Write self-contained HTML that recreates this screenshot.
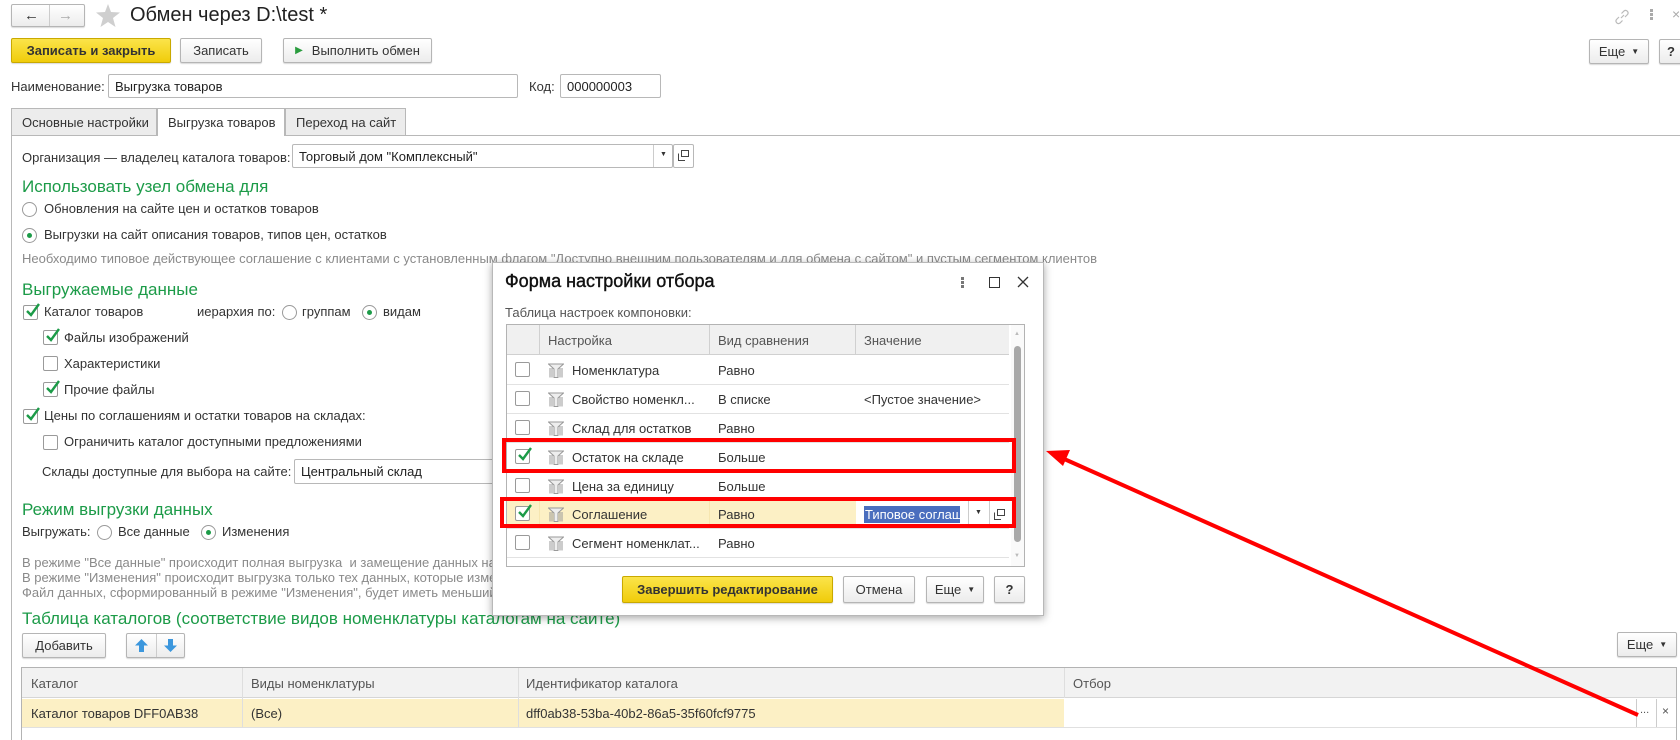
<!DOCTYPE html>
<html><head><meta charset="utf-8">
<style>
*{box-sizing:border-box;margin:0;padding:0}
body{width:1680px;height:740px;overflow:hidden;background:#fff;font-family:"Liberation Sans",Arial,sans-serif;font-size:13px;color:#333;position:relative}
.a{position:absolute;white-space:nowrap}
.btn{position:absolute;border:1px solid #b5b5b5;border-radius:2px;background:linear-gradient(#fff,#ececec);box-shadow:0 1px 1px rgba(0,0,0,.15);display:flex;align-items:center;justify-content:center;color:#333;font-size:13px}
.yb{background:linear-gradient(#fbe44a,#f0cc0a);border-color:#c9a900;font-weight:bold;color:#333}
.inp{position:absolute;border:1px solid #b8b8b8;border-radius:2px;background:#fff;padding-left:6px;display:flex;align-items:center;color:#222}
.h{position:absolute;color:#1c9b48;font-size:17px;white-space:nowrap}
.cb{position:absolute;width:15px;height:15px;border:1px solid #9a9a9a;border-radius:2px;background:#fff}
.cb svg{position:absolute;left:1px;top:-4px}
.rd{position:absolute;width:15px;height:15px;border:1px solid #9a9a9a;border-radius:50%;background:#fff}
.rd.on::after{content:"";position:absolute;left:4px;top:4px;width:5px;height:5px;border-radius:50%;background:#1c9b48}
.note{position:absolute;color:#8a8a8a;white-space:nowrap}
.grid{position:absolute;border:1px solid #b3b3b3}
</style></head><body>

<!-- top bar -->
<div class="btn" style="left:11px;top:4px;width:74px;height:23px;justify-content:flex-start">
  <span style="position:absolute;left:12px;top:2px;font-size:15px;color:#333">&#8592;</span>
  <span style="position:absolute;left:37px;top:0;width:1px;height:21px;background:#ccc"></span>
  <span style="position:absolute;left:46px;top:2px;font-size:15px;color:#aaa">&#8594;</span>
</div>
<svg class="a" style="left:96px;top:4px" width="24" height="23" viewBox="0 0 24 23"><polygon points="12,0 15,8 24,8.5 17,14 19.5,23 12,18 4.5,23 7,14 0,8.5 9,8" fill="#cfcfcf"/></svg>
<div class="a" style="left:130px;top:4px;font-size:20px;color:#222">Обмен через D:\test *</div>
<svg class="a" style="left:1614px;top:9px" width="16" height="16" viewBox="0 0 16 16"><path d="M7 9 L10 6 M5 8 L2.5 10.5 a2.5 2.5 0 0 0 3.5 3.5 L8.5 11.5 M11 8 L13.5 5.5 a2.5 2.5 0 0 0 -3.5 -3.5 L7.5 4.5" stroke="#bbb" fill="none" stroke-width="1.2"/></svg>
<div class="a" style="left:1650px;top:9px;width:3px;height:3px;background:#aaa;box-shadow:0 4px #aaa,0 8px #aaa"></div>
<div class="a" style="left:1672px;top:6px;color:#aaa;font-size:14px">×</div>

<div class="btn yb" style="left:11px;top:38px;width:160px;height:25px">Записать и закрыть</div>
<div class="btn" style="left:180px;top:38px;width:82px;height:25px">Записать</div>
<div class="btn" style="left:283px;top:38px;width:149px;height:25px"><span style="color:#2a9c3e;font-size:10px;margin-right:9px">&#9654;</span>Выполнить обмен</div>
<div class="btn" style="left:1589px;top:39px;width:60px;height:25px">Еще <span style="font-size:8px;margin-left:6px">&#9660;</span></div>
<div class="btn" style="left:1659px;top:39px;width:30px;height:25px;font-weight:bold;justify-content:flex-start;padding-left:7px">?</div>

<div class="a" style="left:11px;top:79px">Наименование:</div>
<div class="inp" style="left:108px;top:74px;width:410px;height:24px">Выгрузка товаров</div>
<div class="a" style="left:529px;top:79px">Код:</div>
<div class="inp" style="left:560px;top:74px;width:101px;height:24px">000000003</div>

<!-- tabs -->
<div class="a" style="left:11px;top:135px;width:1669px;height:1px;background:#b8b8b8"></div>
<div class="a" style="left:11px;top:135px;width:1px;height:605px;background:#b8b8b8"></div>
<div class="a" style="left:11px;top:108px;width:146px;height:27px;border:1px solid #b8b8b8;border-bottom:none;background:#ececec;padding:6px 0 0 10px">Основные настройки</div>
<div class="a" style="left:157px;top:108px;width:128px;height:28px;border:1px solid #b8b8b8;border-bottom:none;background:#fff;padding:6px 0 0 10px">Выгрузка товаров</div>
<div class="a" style="left:285px;top:108px;width:121px;height:27px;border:1px solid #b8b8b8;border-bottom:none;background:#ececec;padding:6px 0 0 10px">Переход на сайт</div>

<div class="a" style="left:22px;top:150px">Организация — владелец каталога товаров:</div>
<div class="inp" style="left:292px;top:144px;width:381px;height:24px">Торговый дом "Комплексный"</div>
<div class="a" style="left:653px;top:145px;width:1px;height:22px;background:#ccc"></div>
<div class="a" style="left:660px;top:151px;font-size:7px">&#9660;</div>
<div class="inp" style="left:673px;top:144px;width:21px;height:24px;padding:0"></div>
<svg class="a" style="left:678px;top:150px" width="11" height="11" viewBox="0 0 11 11"><rect x="3.5" y="0.5" width="7" height="6" fill="none" stroke="#444"/><path d="M0.5 3.5 V10.5 H7" fill="none" stroke="#444"/></svg>

<div class="h" style="left:22px;top:177px">Использовать узел обмена для</div>
<div class="rd" style="left:22px;top:202px"></div><div class="a" style="left:44px;top:201px">Обновления на сайте цен и остатков товаров</div>
<div class="rd on" style="left:22px;top:228px"></div><div class="a" style="left:44px;top:227px">Выгрузки на сайт описания товаров, типов цен, остатков</div>
<div class="note" style="left:22px;top:251px">Необходимо типовое действующее соглашение с клиентами с установленным флагом "Доступно внешним пользователям и для обмена с сайтом" и пустым сегментом клиентов</div>

<div class="h" style="left:22px;top:280px">Выгружаемые данные</div>
<div class="cb" style="left:23px;top:305px"><svg width="16" height="16" viewBox="0 0 16 16"><path d="M2 9 L6 13 L14 2" stroke="#1c9b48" stroke-width="2.4" fill="none"/></svg></div>
<div class="a" style="left:44px;top:304px">Каталог товаров</div>
<div class="a" style="left:197px;top:304px">иерархия по:</div>
<div class="rd" style="left:282px;top:305px"></div><div class="a" style="left:302px;top:304px">группам</div>
<div class="rd on" style="left:362px;top:305px"></div><div class="a" style="left:383px;top:304px">видам</div>
<div class="cb" style="left:43px;top:330px"><svg width="16" height="16" viewBox="0 0 16 16"><path d="M2 9 L6 13 L14 2" stroke="#1c9b48" stroke-width="2.4" fill="none"/></svg></div>
<div class="a" style="left:64px;top:330px">Файлы изображений</div>
<div class="cb" style="left:43px;top:356px"></div><div class="a" style="left:64px;top:356px">Характеристики</div>
<div class="cb" style="left:43px;top:382px"><svg width="16" height="16" viewBox="0 0 16 16"><path d="M2 9 L6 13 L14 2" stroke="#1c9b48" stroke-width="2.4" fill="none"/></svg></div>
<div class="a" style="left:64px;top:382px">Прочие файлы</div>
<div class="cb" style="left:23px;top:409px"><svg width="16" height="16" viewBox="0 0 16 16"><path d="M2 9 L6 13 L14 2" stroke="#1c9b48" stroke-width="2.4" fill="none"/></svg></div>
<div class="a" style="left:44px;top:408px">Цены по соглашениям и остатки товаров на складах:</div>
<div class="cb" style="left:43px;top:435px"></div><div class="a" style="left:64px;top:434px">Ограничить каталог доступными предложениями</div>
<div class="a" style="left:42px;top:464px">Склады доступные для выбора на сайте:</div>
<div class="inp" style="left:294px;top:459px;width:220px;height:25px">Центральный склад</div>

<div class="h" style="left:22px;top:500px">Режим выгрузки данных</div>
<div class="a" style="left:22px;top:524px">Выгружать:</div>
<div class="rd" style="left:97px;top:525px"></div><div class="a" style="left:118px;top:524px">Все данные</div>
<div class="rd on" style="left:201px;top:525px"></div><div class="a" style="left:222px;top:524px">Изменения</div>
<div class="note" style="left:22px;top:555px">В режиме "Все данные" происходит полная выгрузка &nbsp;и замещение данных на сайте</div>
<div class="note" style="left:22px;top:570px">В режиме "Изменения" происходит выгрузка только тех данных, которые изменились</div>
<div class="note" style="left:22px;top:585px">Файл данных, сформированный в режиме "Изменения", будет иметь меньший размер</div>

<div class="h" style="left:22px;top:609px">Таблица каталогов (соответствие видов номенклатуры каталогам на сайте)</div>
<div class="btn" style="left:22px;top:633px;width:84px;height:25px">Добавить</div>
<div class="btn" style="left:126px;top:633px;width:59px;height:25px">
 <span style="position:absolute;left:29px;top:0;width:1px;height:23px;background:#ccc"></span>
 <svg class="a" style="left:8px;top:5px" width="13" height="13" viewBox="0 0 13 13"><path d="M6.5 0 L13 6.5 H9 V13 H4 V6.5 H0 Z" fill="#3c97dd"/></svg>
 <svg class="a" style="left:37px;top:5px" width="13" height="13" viewBox="0 0 13 13"><path d="M6.5 13 L13 6.5 H9 V0 H4 V6.5 H0 Z" fill="#3c97dd"/></svg>
</div>
<div class="btn" style="left:1617px;top:632px;width:60px;height:25px">Еще <span style="font-size:8px;margin-left:6px">&#9660;</span></div>

<div class="grid" style="left:21px;top:667px;width:1656px;height:73px;border-bottom:none"></div>
<div class="a" style="left:22px;top:668px;width:1654px;height:30px;background:#f2f2f2;border-bottom:1px solid #d6d6d6"></div>
<div class="a" style="left:22px;top:699px;width:1042px;height:28px;background:#fcf0c5"></div>
<div class="a" style="left:22px;top:727px;width:1654px;height:1px;background:#e0e0e0"></div>
<div class="a" style="left:242px;top:668px;width:1px;height:59px;background:#dedede"></div>
<div class="a" style="left:518px;top:668px;width:1px;height:59px;background:#dedede"></div>
<div class="a" style="left:1064px;top:668px;width:1px;height:30px;background:#dedede"></div>
<div class="a" style="left:31px;top:676px;color:#555">Каталог</div>
<div class="a" style="left:251px;top:676px;color:#555">Виды номенклатуры</div>
<div class="a" style="left:526px;top:676px;color:#555">Идентификатор каталога</div>
<div class="a" style="left:1073px;top:676px;color:#555">Отбор</div>
<div class="a" style="left:31px;top:706px">Каталог товаров DFF0AB38</div>
<div class="a" style="left:251px;top:706px">(Все)</div>
<div class="a" style="left:526px;top:706px">dff0ab38-53ba-40b2-86a5-35f60fcf9775</div>
<div class="a" style="left:1636px;top:699px;width:1px;height:28px;background:#ccc"></div>
<div class="a" style="left:1656px;top:699px;width:1px;height:28px;background:#ccc"></div>
<div class="a" style="left:1640px;top:704px;font-size:11px;color:#555">...</div>
<div class="a" style="left:1662px;top:704px;font-size:12px;color:#555">×</div>

<!-- dialog -->
<div class="a" style="left:492px;top:262px;width:552px;height:354px;background:#fff;border:1px solid #b8b8b8;box-shadow:0 2px 8px rgba(0,0,0,.35)"></div>
<div class="a" style="left:505px;top:271px;font-size:18px;color:#111;-webkit-text-stroke:0.4px #111">Форма настройки отбора</div>
<div class="a" style="left:961px;top:277px;width:3px;height:3px;background:#777;box-shadow:0 4px #777,0 8px #777"></div>
<div class="a" style="left:989px;top:277px;width:11px;height:11px;border:1.5px solid #333"></div>
<svg class="a" style="left:1017px;top:276px" width="12" height="12" viewBox="0 0 12 12"><path d="M1 1 L11 11 M11 1 L1 11" stroke="#333" stroke-width="1.3"/></svg>
<div class="a" style="left:505px;top:305px;color:#555">Таблица настроек компоновки:</div>

<div class="grid" style="left:506px;top:324px;width:519px;height:243px"></div>
<div class="a" style="left:507px;top:325px;width:502px;height:30px;background:#f0f0f0;border-bottom:1px solid #d0d0d0"></div>
<div class="a" style="left:539px;top:325px;width:1px;height:30px;background:#d0d0d0"></div>
<div class="a" style="left:709px;top:325px;width:1px;height:30px;background:#d0d0d0"></div>
<div class="a" style="left:855px;top:325px;width:1px;height:30px;background:#d0d0d0"></div>
<div class="a" style="left:548px;top:333px;color:#555">Настройка</div>
<div class="a" style="left:718px;top:333px;color:#555">Вид сравнения</div>
<div class="a" style="left:864px;top:333px;color:#555">Значение</div>
<div class="a" style="left:1011px;top:325px;width:13px;height:241px;background:#fafafa"></div>
<div class="a" style="left:1014px;top:346px;width:7px;height:196px;background:#a9a9a9;border-radius:4px"></div>
<div class="a" style="left:1014px;top:331px;font-size:6px;color:#bbb">&#9650;</div>
<div class="a" style="left:1014px;top:553px;font-size:6px;color:#bbb">&#9660;</div>

<div id="rows"></div>
<!-- row lines -->
<div class="a" style="left:507px;top:384px;width:502px;height:1px;background:#e2e2e2"></div>
<div class="a" style="left:507px;top:413px;width:502px;height:1px;background:#e2e2e2"></div>
<div class="a" style="left:507px;top:442px;width:502px;height:1px;background:#e2e2e2"></div>
<div class="a" style="left:507px;top:471px;width:502px;height:1px;background:#e2e2e2"></div>
<div class="a" style="left:507px;top:500px;width:502px;height:1px;background:#e2e2e2"></div>
<div class="a" style="left:507px;top:528px;width:502px;height:1px;background:#e2e2e2"></div>
<div class="a" style="left:507px;top:557px;width:502px;height:1px;background:#e2e2e2"></div>
<div class="a" style="left:507px;top:501px;width:349px;height:27px;background:#fcf0c5"></div>
<div class="a" style="left:539px;top:501px;width:1px;height:27px;background:#f6e6b0"></div>
<div class="a" style="left:709px;top:501px;width:1px;height:27px;background:#f6e6b0"></div>
<div class="a" style="left:864px;top:506px;height:17px;background:#4a6ebe;color:#fff;padding:1px 1px 0 1px;width:96px;overflow:hidden">Типовое соглаш</div>
<div class="a" style="left:968px;top:501px;width:1px;height:27px;background:#ccc"></div>
<div class="a" style="left:989px;top:501px;width:1px;height:27px;background:#ccc"></div>
<div class="a" style="left:975px;top:509px;font-size:7px">&#9660;</div>
<svg class="a" style="left:994px;top:509px" width="11" height="11" viewBox="0 0 11 11"><rect x="3.5" y="0.5" width="7" height="6" fill="none" stroke="#444"/><path d="M0.5 3.5 V10.5 H7" fill="none" stroke="#444"/></svg>

<!-- row content -->
<div class="cb" style="left:515px;top:362px"></div>
<div class="cb" style="left:515px;top:391px"></div>
<div class="cb" style="left:515px;top:420px"></div>
<div class="cb" style="left:515px;top:449px"><svg width="16" height="16" viewBox="0 0 16 16"><path d="M2 9 L6 13 L14 2" stroke="#1c9b48" stroke-width="2.4" fill="none"/></svg></div>
<div class="cb" style="left:515px;top:478px"></div>
<div class="cb" style="left:515px;top:506px"><svg width="16" height="16" viewBox="0 0 16 16"><path d="M2 9 L6 13 L14 2" stroke="#1c9b48" stroke-width="2.4" fill="none"/></svg></div>
<div class="cb" style="left:515px;top:535px"></div>

<svg width="0" height="0" style="position:absolute"><defs><g id="fi"><path d="M0.5 2 H15.5 L10 7 V15.5 H6 V7 Z" fill="#eee" stroke="#999"/><path d="M2 6 V15.5 M4 6 V15.5 M12 6 V15.5 M14 6 V15.5" stroke="#999"/></g></defs></svg>
<svg class="a" style="left:548px;top:362px" width="16" height="16"><use href="#fi"/></svg>
<svg class="a" style="left:548px;top:391px" width="16" height="16"><use href="#fi"/></svg>
<svg class="a" style="left:548px;top:420px" width="16" height="16"><use href="#fi"/></svg>
<svg class="a" style="left:548px;top:449px" width="16" height="16"><use href="#fi"/></svg>
<svg class="a" style="left:548px;top:478px" width="16" height="16"><use href="#fi"/></svg>
<svg class="a" style="left:548px;top:506px" width="16" height="16"><use href="#fi"/></svg>
<svg class="a" style="left:548px;top:535px" width="16" height="16"><use href="#fi"/></svg>
<div class="a" style="left:507px;top:558px;width:502px;height:8px;background:#fff"></div>

<div class="a" style="left:572px;top:363px">Номенклатура</div><div class="a" style="left:718px;top:363px">Равно</div>
<div class="a" style="left:572px;top:392px">Свойство номенкл...</div><div class="a" style="left:718px;top:392px">В списке</div><div class="a" style="left:864px;top:392px">&lt;Пустое значение&gt;</div>
<div class="a" style="left:572px;top:421px">Склад для остатков</div><div class="a" style="left:718px;top:421px">Равно</div>
<div class="a" style="left:572px;top:450px">Остаток на складе</div><div class="a" style="left:718px;top:450px">Больше</div>
<div class="a" style="left:572px;top:479px">Цена за единицу</div><div class="a" style="left:718px;top:479px">Больше</div>
<div class="a" style="left:572px;top:507px">Соглашение</div><div class="a" style="left:718px;top:507px">Равно</div>
<div class="a" style="left:572px;top:536px">Сегмент номенклат...</div><div class="a" style="left:718px;top:536px">Равно</div>

<div class="btn yb" style="left:622px;top:576px;width:211px;height:27px">Завершить редактирование</div>
<div class="btn" style="left:843px;top:576px;width:72px;height:27px">Отмена</div>
<div class="btn" style="left:926px;top:576px;width:58px;height:27px">Еще <span style="font-size:8px;margin-left:6px">&#9660;</span></div>
<div class="btn" style="left:994px;top:576px;width:31px;height:27px;font-weight:bold">?</div>

<!-- red annotations -->
<div class="a" style="left:502px;top:438px;width:514px;height:35px;border:4px solid #f00"></div>
<div class="a" style="left:500px;top:497px;width:516px;height:31px;border:4px solid #f00"></div>
<svg class="a" style="left:0;top:0" width="1680" height="740">
<line x1="1638" y1="715" x2="1062" y2="458" stroke="#f00" stroke-width="4"/>
<polygon points="1046,451 1070,450 1063,466" fill="#f00"/>
</svg>
</body></html>
